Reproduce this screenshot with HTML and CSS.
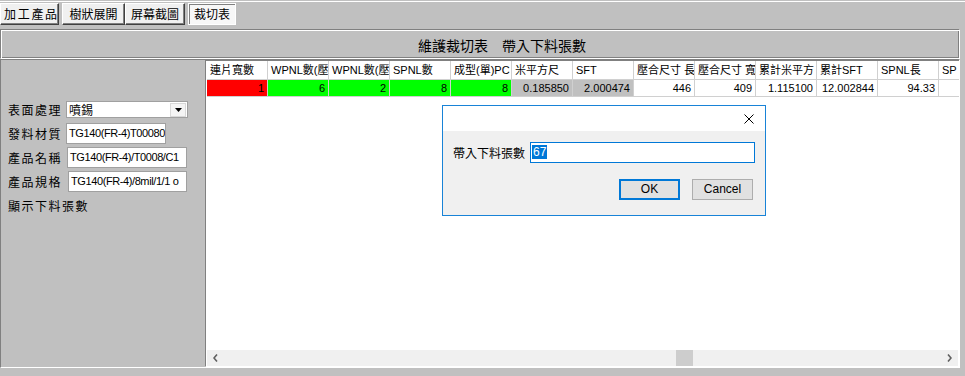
FILE: index.html
```html
<!DOCTYPE html>
<html>
<head>
<meta charset="utf-8">
<link rel="stylesheet" href="styles.css">
</head>
<body>
<div class="toolbar">
  <div class="tbtn b1">加工產品</div>
  <div class="tbtn b2">樹狀展開</div>
  <div class="tbtn b3">屏幕截圖</div>
  <div class="tbtn b4 pressed">裁切表</div>
</div>
<div class="title">維護裁切表　帶入下料張數</div>
<div class="main">
  <div class="form">
    <div class="row">
      <span class="lbl">表面處理</span>
      <div class="select">
        <span class="sel-text">噴錫</span>
        <span class="dd"><svg width="7" height="4" viewBox="0 0 7 4"><polygon points="0,0 7,0 3.5,4" fill="#000"/></svg></span>
      </div>
    </div>
    <div class="row"><span class="lbl">發料材質</span><div class="inp w1">TG140(FR-4)T00080</div></div>
    <div class="row"><span class="lbl">產品名稱</span><div class="inp w2">TG140(FR-4)/T0008/C1</div></div>
    <div class="row"><span class="lbl">產品規格</span><div class="inp w3">TG140(FR-4)/8mil/1/1 o</div></div>
    <div class="row"><span class="lbl lbl-wide">顯示下料張數</span></div>
  </div>
  <div class="grid">
    <div class="ghead">
      <div class="hc">連片寬數</div>
      <div class="hc">WPNL數(壓</div>
      <div class="hc">WPNL數(壓</div>
      <div class="hc">SPNL數</div>
      <div class="hc">成型(單)PC</div>
      <div class="hc">米平方尺</div>
      <div class="hc">SFT</div>
      <div class="hc">壓合尺寸 長</div>
      <div class="hc">壓合尺寸 寬</div>
      <div class="hc">累計米平方</div>
      <div class="hc">累計SFT</div>
      <div class="hc">SPNL長</div>
      <div class="hc">SP</div>
    </div>
    <div class="grow">
      <div class="dc red">1</div>
      <div class="dc green">6</div>
      <div class="dc green">2</div>
      <div class="dc green">8</div>
      <div class="dc green">8</div>
      <div class="dc gray">0.185850</div>
      <div class="dc gray">2.000474</div>
      <div class="dc">446</div>
      <div class="dc">409</div>
      <div class="dc">1.115100</div>
      <div class="dc">12.002844</div>
      <div class="dc">94.33</div>
      <div class="dc"></div>
    </div>
    <div class="gfill"></div>
    <div class="hscroll">
      <div class="sarrow"><svg width="5" height="8" viewBox="0 0 5 8"><polyline points="4,0.5 1,4 4,7.5" fill="none" stroke="#606060" stroke-width="1.6"/></svg></div>
      <div class="track"><div class="thumb" style="margin-left:452px"></div></div>
      <div class="sarrow"><svg width="5" height="8" viewBox="0 0 5 8"><polyline points="1,0.5 4,4 1,7.5" fill="none" stroke="#606060" stroke-width="1.6"/></svg></div>
    </div>
  </div>
</div>

<div class="dialog">
  <div class="dlg-title">
    <svg width="10" height="10" viewBox="0 0 10 10"><path d="M0.5,0.5 L9.5,9.5 M9.5,0.5 L0.5,9.5" stroke="#000" stroke-width="1" fill="none"/></svg>
  </div>
  <div class="dlg-body">
    <div class="dlg-row">
      <span class="dlg-lbl">帶入下料張數</span>
      <div class="dlg-inp"><span class="selected">67</span></div>
    </div>
    <div class="dlg-btns">
      <div class="dbtn ok">OK</div>
      <div class="dbtn">Cancel</div>
    </div>
  </div>
</div>
</body>
</html>
```
FILE: styles.css
```css
* { box-sizing: border-box; }

body {
  margin: 0;
  width: 965px;
  height: 376px;
  overflow: hidden;
  position: relative;
  background: #c0c0c0;
  color: #000;
  font-family: "Liberation Sans", "Noto Sans CJK TC", sans-serif;
  font-size: 12px;
}

/* ---------- toolbar ---------- */
.toolbar {
  margin-top: 1px;
  border-top: 1px solid #fff;
  padding-top: 1px;
  height: 28px;
  display: flex;
  align-items: flex-start;
}

.tbtn {
  height: 22px;
  background: #f0f0f0;
  border: 1px solid;
  border-color: #fff #404040 #404040 #fff;
  box-shadow: inset -1px -1px #808080;
  font-family: "Noto Sans CJK TC", sans-serif;
  font-size: 12px;
  line-height: 19px;
  white-space: nowrap;
  overflow: hidden;
  text-align: center;
}

.b1 { width: 59px; text-align: left; padding-left: 3px; letter-spacing: 1.7px; }
.b2 { width: 63px; margin-left: 3px; }
.b3 { width: 60px; margin-left: 0; }
.b4 { width: 48px; margin-left: 3px; }

.pressed {
  background: #f7f7f7;
  border-color: #fff;
  box-shadow: inset 1px 1px #808080;
}

/* ---------- title ---------- */
.title {
  width: 960px;
  height: 30px;
  border: 1px solid;
  border-color: #808080 #fff #fff #808080;
  box-shadow: inset 1px 1px #fff, inset -1px -1px #808080;
  font-family: "Noto Sans CJK TC", sans-serif;
  font-size: 14px;
  line-height: 24px;
  padding: 3px 0 0 417px;
  white-space: nowrap;
}

/* ---------- main ---------- */
.main {
  width: 960px;
  height: 309px;
  border: 1px solid;
  border-color: #808080 #fff #fff #808080;
  display: flex;
}

.form {
  width: 204px;
  flex-shrink: 0;
  padding: 39px 0 0 7px;
  display: flex;
  flex-direction: column;
  gap: 3px;
}

.row {
  height: 21px;
  display: flex;
  align-items: center;
}

.lbl {
  width: 58px;
  flex-shrink: 0;
  font-family: "Noto Sans CJK TC", sans-serif;
  font-size: 12px;
  letter-spacing: 1.5px;
  white-space: nowrap;
}

.lbl-wide { width: auto; }

.select {
  width: 122px;
  height: 17px;
  background: #fff;
  border: 1px solid #a0a0a0;
  display: flex;
  align-items: center;
}

.sel-text {
  flex: 1;
  padding-left: 2px;
  font-family: "Noto Sans CJK TC", sans-serif;
  font-size: 12px;
  line-height: 15px;
}

.dd {
  width: 16px;
  height: 14px;
  margin-right: 1px;
  background: #f4f4f4;
  border: 1px solid #d8d8d8;
  display: flex;
  align-items: center;
  justify-content: center;
}

.inp {
  height: 21px;
  background: #fff;
  border: 1px solid #a0a0a0;
  font-family: "Liberation Sans", sans-serif;
  font-size: 11px;
  letter-spacing: -0.4px;
  line-height: 19px;
  padding-left: 2px;
  white-space: nowrap;
  overflow: hidden;
}

.w1 { width: 100px; }
.w2 { width: 120px; margin-left: 1px; }
.w3 { width: 119px; margin-left: 2px; }

/* ---------- grid ---------- */
.grid {
  flex: 1;
  min-width: 0;
  background: #fff;
  border-top: 1px solid #808080;
  border-left: 1px solid #808080;
  border-bottom: 1px solid #fff;
  padding-left: 1px;
  display: flex;
  flex-direction: column;
  overflow: hidden;
}

.ghead, .grow {
  display: flex;
  flex-shrink: 0;
}

.hc, .dc {
  width: 61px;
  flex-shrink: 0;
  border-right: 1px solid #d0d0d0;
  border-bottom: 1px solid #d0d0d0;
  white-space: nowrap;
  overflow: hidden;
}

.hc {
  height: 19px;
  font-size: 11px;
  line-height: 18px;
  padding-left: 3px;
}

.dc {
  height: 17px;
  font-size: 11px;
  line-height: 16px;
  text-align: right;
  padding-right: 3px;
}

.red { background: #ff0000; }
.green { background: #00ff00; }
.gray { background: #c0c0c0; }

.gfill { flex: 1; }

.hscroll {
  height: 16px;
  flex-shrink: 0;
  background: #f0f0f0;
  display: flex;
  margin-right: 1px;
}

.sarrow {
  width: 17px;
  display: flex;
  align-items: center;
  justify-content: center;
}

.track {
  flex: 1;
  display: flex;
}

.thumb {
  width: 17px;
  height: 16px;
  background: #cdcdcd;
}

/* ---------- dialog ---------- */
.dialog {
  position: absolute;
  left: 442px;
  top: 105px;
  width: 324px;
  height: 111px;
  border: 1px solid #1883d7;
  background: #f0f0f0;
}

.dlg-title {
  height: 25px;
  background: #fff;
  display: flex;
  justify-content: flex-end;
  align-items: center;
  padding-right: 11px;
}

.dlg-body {
  padding: 11px 10px 0 10px;
}

.dlg-row {
  display: flex;
  align-items: center;
  height: 21px;
}

.dlg-lbl {
  width: 77px;
  font-family: "Noto Sans CJK TC", sans-serif;
  font-size: 12px;
  white-space: nowrap;
}

.dlg-inp {
  width: 225px;
  height: 21px;
  background: #fff;
  border: 1px solid #0078d7;
  padding: 2px 0 0 1px;
}

.selected {
  display: inline-block;
  height: 14px;
  line-height: 14px;
  background: #0078d7;
  color: #fff;
  font-size: 12px;
  padding: 0 1px;
}

.dlg-btns {
  display: flex;
  justify-content: flex-end;
  gap: 12px;
  margin-top: 16px;
  padding-right: 2px;
}

.dbtn {
  width: 61px;
  height: 21px;
  background: #e1e1e1;
  border: 1px solid #adadad;
  font-size: 12px;
  line-height: 19px;
  text-align: center;
}

.ok {
  border: 2px solid #0078d7;
  line-height: 17px;
}
```
